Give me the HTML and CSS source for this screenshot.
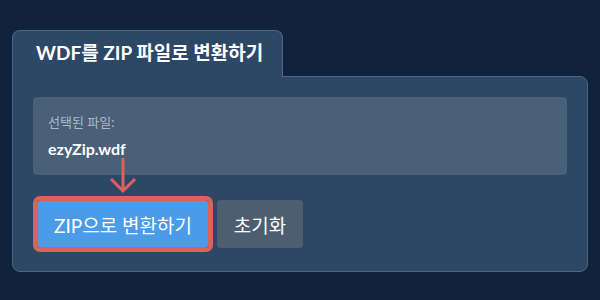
FILE: index.html
```html
<!DOCTYPE html>
<html lang="ko">
<head>
	<meta charset="UTF-8">
	<title>WDF를 ZIP 파일로 변환하기</title>
	<link rel="stylesheet" href="styles.css">
</head>
<body>
	<div class="wrap">
		<div class="tab">WDF를 ZIP 파일로 변환하기</div>
		<div class="panel">
			<div class="file">
				<div class="file-label">선택된 파일:</div>
				<div class="file-name">ezyZip.wdf</div>
			</div>
			<div class="actions">
				<button class="btn btn-convert">ZIP으로 변환하기</button>
				<button class="btn btn-reset">초기화</button>
			</div>
			<svg class="arrow" width="30" height="38" viewBox="0 0 30 38">
				<line x1="15" y1="2" x2="15" y2="35" />
				<polyline points="3,23 15,35 27,23" />
			</svg>
		</div>
	</div>
</body>
</html>
```

FILE: styles.css
```css
*{margin: 0;padding: 0;box-sizing: border-box;}
body{
	background: #10233a;
	font-family: Lato, "Noto Sans CJK KR", sans-serif;
	color: #fff;
}
.wrap{
	padding: 30px 12px 0 12px;
}
.tab{
	display: inline-block;
	position: relative;
	z-index: 1;
	width: 271px;
	height: 47px;
	margin-bottom: -1px;
	padding: 0 23px;
	background: #2d4866;
	border: 1px solid #4c6788;
	border-bottom: none;
	border-radius: 8px 8px 0 0;
	font-size: 19px;
	font-weight: 700;
	line-height: 44px;
	white-space: nowrap;
}
.panel{
	position: relative;
	background: #2d4866;
	border: 1px solid #4c6788;
	border-radius: 0 8px 8px 8px;
	padding: 20px 20px 23px 20px;
}
.file{
	background: #4a5f78;
	border-radius: 4px;
	padding: 15px 15px 16px;
}
.file-label{
	font-size: 13px;
	line-height: 20px;
	color: #aebac8;
	margin-bottom: 7px;
}
.file-name{
	font-size: 16px;
	font-weight: 700;
	line-height: 20px;
}
.actions{
	display: flex;
	gap: 8px;
	margin-top: 25px;
	padding-left: 4px;
}
.btn{
	height: 48px;
	padding: 0 15px;
	border: none;
	border-radius: 4px;
	color: #fff;
	font-family: Lato, "Noto Sans CJK KR", sans-serif;
	font-size: 19px;
	cursor: pointer;
}
.btn-convert{
	width: 172px;
	background: #4a9be8;
	border: 1px solid #d9625d;
	outline: 4px solid #e0605a;
	border-radius: 3px;
}
.btn-reset{
	width: 86px;
	background: #4d5e70;
}
.arrow{
	position: absolute;
	left: 95px;
	top: 79px;
	fill: none;
	stroke: #e0605a;
	stroke-width: 3;
}
```
